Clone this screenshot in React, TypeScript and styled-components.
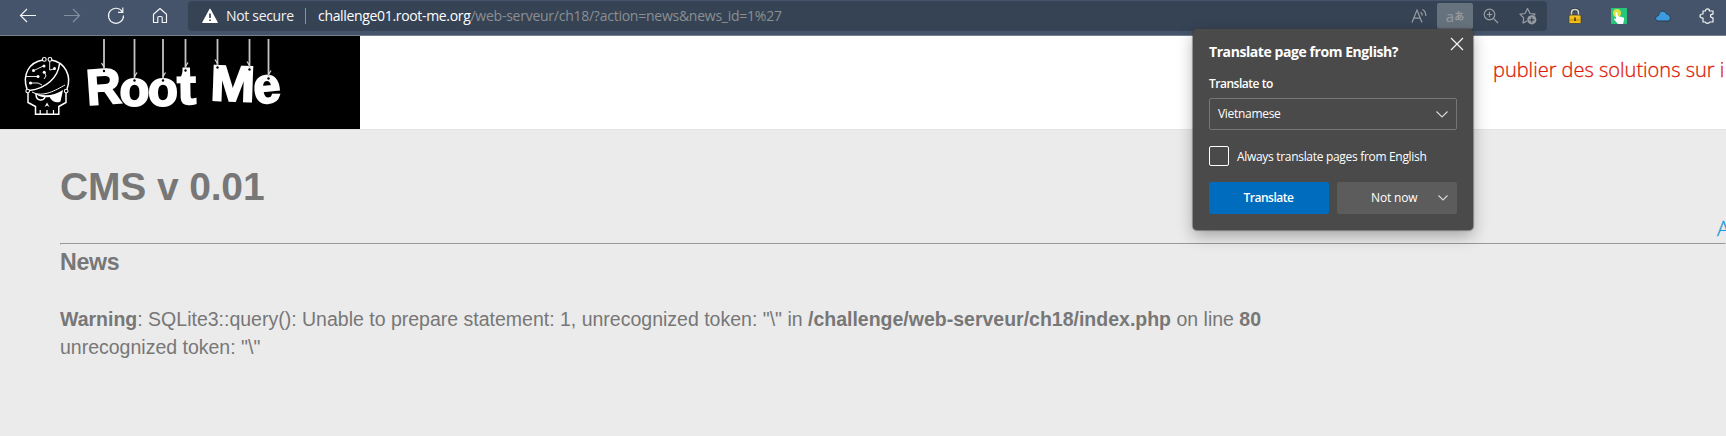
import React from 'react';
import styled, { createGlobalStyle } from 'styled-components';

const GlobalStyle = createGlobalStyle`
  * { box-sizing: border-box; }
  html, body { margin: 0; height: 100%; overflow: hidden; background: #ebebeb; }
`;

const ui = `"Open Sans", "Noto Sans", "Noto Sans CJK JP", sans-serif`;

const Browser = styled.div`
  position: relative;
  width: 1726px;
  height: 436px;
  overflow: hidden;
  display: flex;
  flex-direction: column;
  background: #ebebeb;
  font-family: ${ui};
`;

const Toolbar = styled.header`
  flex: none;
  height: 36px;
  display: flex;
  align-items: flex-start;
  background: #45546a;
  border-bottom: 1px solid #75808e;
`;

const NavButtons = styled.nav`
  width: 188px;
  height: 32px;
  padding-left: 18px;
  display: flex;
  align-items: center;
  gap: 24px;
`;

const Icon = styled.svg<{ $tone?: string }>`
  display: block;
  flex: none;
  overflow: visible;
  fill: none;
  stroke: ${(p) => p.$tone ?? '#f2f4f6'};
  stroke-width: 1.2;
`;

const AddressBar = styled.div`
  width: 1359px;
  height: 30px;
  margin-top: 1px;
  padding: 0 10px 0 14px;
  display: flex;
  align-items: center;
  background: #364354;
  border-radius: 4px;
`;

const SecurityLabel = styled.span`
  width: 87px;
  padding-left: 8px;
  font-size: 14px;
  line-height: 28px;
  letter-spacing: -0.32px;
  color: #f0f1f3;
  white-space: nowrap;
`;

const Divider = styled.i`
  width: 1px;
  height: 16px;
  margin-right: 12px;
  background: #8a929c;
`;

const Url = styled.span`
  flex: 1;
  font-size: 14px;
  line-height: 28px;
  letter-spacing: -0.25px;
  color: #8b8f93;
  white-space: nowrap;
`;

const Host = styled.span`
  letter-spacing: -0.33px;
  color: #fff;
`;

const BarTools = styled.div`
  display: flex;
  align-items: center;
`;

const TranslateToggle = styled.span`
  width: 36px;
  height: 26px;
  margin: 1px 10px 2px 9px;
  display: flex;
  align-items: center;
  justify-content: center;
  border-radius: 2px;
  background: #67727f;
  color: #969a9e;
  font-size: 15px;
  line-height: 22px;
  small { font-size: 10px; font-weight: 700; line-height: 22px; }
`;

const StarSlot = styled.span`
  margin-left: 20px;
`;

const Extensions = styled.div`
  height: 32px;
  padding-left: 20px;
  display: flex;
  align-items: center;
  gap: 28px;
`;

const Banner = styled.div`
  flex: none;
  height: 94px;
  display: flex;
  background: #fff;
  border-bottom: 1px solid #e3e3e3;
  overflow: hidden;
`;

const Logo = styled.svg`
  flex: none;
  display: block;
  width: 360px;
  height: 93px;
  background: #000;
`;

const Ticker = styled.div`
  margin-left: 1133px;
  padding-top: 20px;
  font-weight: 300;
  font-size: 20px;
  line-height: 28px;
  color: #dd1a05;
  -webkit-text-stroke: 0.3px #dd1a05;
  white-space: nowrap;
`;

const Content = styled.main`
  flex: 1;
  padding-left: 60px;
  overflow: hidden;
  font-family: "Liberation Sans", Arial, sans-serif;
  font-size: 19.5px;
  line-height: 28px;
  color: #777;
`;

const Title = styled.h1`
  margin: 34px 0 0;
  font-size: 39px;
  line-height: 46px;
  letter-spacing: -0.15px;
`;

const LinkRow = styled.div`
  height: 33px;
  padding: 4px 0 0 1657px;
  font-family: ${ui};
  font-weight: 300;
  font-size: 21px;
  line-height: 28px;
  color: #1b9bd0;
  -webkit-text-stroke: 0.3px #1b9bd0;
`;

const Rule = styled.hr`
  margin: 0;
  height: 2px;
  border: 1px solid;
  border-color: #949896 #eee #eee #949896;
`;

const Heading = styled.h3`
  margin: 3px 0 29px;
  font-size: 23.2px;
  line-height: 28px;
  letter-spacing: -0.3px;
`;

const Message = styled.p`
  margin: 0;
  white-space: pre;
`;

const Popup = styled.section`
  position: absolute;
  left: 1193px;
  top: 29px;
  width: 280px;
  height: 201px;
  padding: 17px 16px 16px;
  background: #4a4a4a;
  border-radius: 4px;
  box-shadow: 0 0 1px 1px rgba(60, 60, 60, 0.5), 0 6px 16px rgba(0, 0, 0, 0.3);
  color: #fff;
  font-size: 12px;
  line-height: 16px;
  white-space: nowrap;
`;

const PopupTitle = styled.h2`
  margin: 0;
  height: 30px;
  display: flex;
  justify-content: space-between;
  font-size: 14px;
  line-height: 12px;
  letter-spacing: -0.43px;
`;

const CloseIcon = styled(Icon)`
  margin: -9px -7px 0 0;
`;

const FieldLabel = styled.div`
  height: 22px;
  font-weight: 600;
  letter-spacing: -0.48px;
`;

const Select = styled.div`
  height: 32px;
  padding: 0 8px 1px;
  display: flex;
  align-items: center;
  justify-content: space-between;
  border: 1px solid #767676;
  border-radius: 2px;
  letter-spacing: -0.3px;
`;

const CheckRow = styled.label`
  margin: 16px 0;
  display: flex;
  align-items: center;
  gap: 8px;
  letter-spacing: -0.31px;
`;

const CheckText = styled.span`
  padding-top: 1px;
`;

const Box = styled.span`
  width: 20px;
  height: 20px;
  border: 1px solid #fff;
  border-radius: 2px;
`;

const Buttons = styled.div`
  display: grid;
  grid-template-columns: 120px 120px;
  gap: 8px;
`;

const Button = styled.button<{ $primary?: boolean }>`
  height: 32px;
  padding: ${(p) => (p.$primary ? '0 1px 1px 0' : '0 9px 1px 34px')};
  display: flex;
  align-items: center;
  justify-content: ${(p) => (p.$primary ? 'center' : 'space-between')};
  border: 0;
  border-radius: 2px;
  background: ${(p) => (p.$primary ? '#006cbe' : '#5c5c5c')};
  color: #fff;
  font: ${(p) => (p.$primary ? 600 : 400)} 12px/16px ${ui};
  letter-spacing: ${(p) => (p.$primary ? '-0.5px' : '-0.15px')};
`;

const HangingLetter = styled.text`
  font: bold 50px "Liberation Sans", Arial, sans-serif;
  fill: #fff;
  stroke: #fff;
  stroke-width: 2;
`;

const strings = [
  { x: 104, y: 35, side: -1 },
  { x: 134.5, y: 44.5, side: 1 },
  { x: 163, y: 44.5, side: 1 },
  { x: 185.5, y: 34.5, side: 1 },
  { x: 217.5, y: 31.5, side: -1 },
  { x: 249.5, y: 33.5, side: -1 },
  { x: 268.5, y: 42.5, side: 1 },
];

const letters = [
  { c: 'R', x: 87.5, y: 69, r: -4, sx: 0.96 },
  { c: 'o', x: 119.5, y: 69.5, r: 0, sx: 0.98 },
  { c: 'o', x: 148, y: 69.5, r: 0, sx: 0.98 },
  { c: 't', x: 177.5, y: 68, r: -1, sx: 1.12 },
  { c: 'M', x: 210, y: 64, r: 2, sx: 1.07 },
  { c: 'e', x: 255, y: 68, r: -6, sx: 0.97 },
];

function RootMeLogo() {
  return (
    <Logo viewBox="0 0 360 93">
      <g fill="none" stroke="#fff" strokeWidth="1.5">
        <path d="M27 53C22 39 29 26 43 24M51 24C65 26 72 40 67 53" />
        <circle cx="44.3" cy="23.4" r="1.9" strokeWidth="1.1" />
        <circle cx="50" cy="23.4" r="1.9" strokeWidth="1.1" />
        <circle cx="27.7" cy="55" r="1.8" strokeWidth="1.1" />
        <circle cx="66.2" cy="55" r="1.8" strokeWidth="1.1" />
        <path d="M28 57V66.500L35.500 70.500V78.300H58.800V70.500L66 66.500V57" />
        <path d="M40.200 74V78M47 74V78M53.500 74V78" strokeWidth="1.2" />
        <path d="M29.500 54.500C47 52 58 41 59.500 28" />
        <path d="M32 56C43 62 56 54 65 49" strokeWidth="1" />
        <path d="M49.700 25V34L54 33M33 35L39 32L43.500 30M44.500 36L46 40L44 43M26 40.500H38M31 47H38L42 49" strokeWidth="0.9" />
        <path d="M36 58C36 66 44 65 45 61" />
      </g>
      <g fill="#fff">
        <circle cx="33.500" cy="34.500" r="1.500" />
        <circle cx="44" cy="30" r="1.500" />
        <circle cx="44.200" cy="36.300" r="1.500" />
        <circle cx="54.500" cy="32.500" r="1.500" />
        <circle cx="38" cy="40.500" r="1.500" />
        <circle cx="30.500" cy="47" r="1.600" />
        <path d="M34 56.500C42 61 54 60 63 54L60.500 65.500C57 67.500 52 66 49.500 61C43 62 37 60 34 56.500Z" />
        <path d="M44.500 71L47 66.500L49.500 71L47 69.500Z" />
      </g>
      <path d="M38 60.500C40 62 42 62 43.500 61.500C42 64 39 63.500 38 60.500Z" fill="#000" />
      {letters.map((l, i) => (
        <HangingLetter key={i} transform={`translate(${l.x} ${l.y}) rotate(${l.r}) scale(${l.sx} 1)`}>
          {l.c}
        </HangingLetter>
      ))}
      <path d="M182.500 42V31.500H190V42Z" fill="#fff" />
      {strings.map((s) => (
        <g key={s.x}>
          <path d={`M${s.x} 3V${s.y - 2}`} stroke="#c4c4c4" strokeWidth="1.8" />
          <path d={`M${s.x} ${s.y - 4}l${2.5 * s.side} -4`} stroke="#ddd" strokeWidth="1.2" />
          <circle cx={s.x} cy={s.y} r="1.200" fill="#000" />
        </g>
      ))}
    </Logo>
  );
}

const Chevron = ({ size }: { size: number }) => (
  <Icon width={size} height="8" viewBox={`0 0 ${size} 8`} $tone="#d6d6d6">
    <path d={`M0.500 1.500L${size / 2} ${size / 2 + 1}L${size - 0.5} 1.500`} />
  </Icon>
);

export default function App() {
  return (
    <Browser>
      <GlobalStyle />
      <Toolbar>
        <NavButtons>
          <Icon width="20" height="20" viewBox="0 0 20 20">
            <path d="M18 9.500H2.500M9 3L2.500 9.500L9 16" />
          </Icon>
          <Icon width="20" height="20" viewBox="0 0 20 20" $tone="#8390a0">
            <path d="M2 9.500H17.500M11 3L17.500 9.500L11 16" />
          </Icon>
          <Icon width="20" height="20" viewBox="0 0 20 20">
            <path d="M16.500 6A7.500 7.500 0 1 0 17.500 9.500M16.800 1.500V6.300H12" />
          </Icon>
          <Icon width="20" height="20" viewBox="0 0 20 20">
            <path d="M3.500 8.200L10 2.500L16.500 8.200V16.500H12.200V11.500Q12.200 10.500 11.200 10.500H8.800Q7.800 10.500 7.800 11.500V16.500H3.500Z" strokeLinejoin="round" />
          </Icon>
        </NavButtons>
        <AddressBar>
          <Icon width="16" height="16" viewBox="0 0 16 16" $tone="none">
            <path d="M8 1.300L15.200 14.500H0.800Z" fill="#fff" stroke="#fff" strokeLinejoin="round" />
            <path d="M8 5.500V10M8 11.500V13" stroke="#364354" strokeWidth="1.700" />
          </Icon>
          <SecurityLabel>Not secure</SecurityLabel>
          <Divider />
          <Url>
            <Host>challenge01.root-me.org</Host>/web-serveur/ch18/?action=news&amp;news_id=1%27
          </Url>
          <BarTools>
            <Icon width="17" height="16" viewBox="0 0 17 16" $tone="#989da3">
              <path d="M1 14.500L6 2L11 14.500M2.700 10.200H9.300M9.500 4.200Q11.300 5.300 11.300 7.500M11.500 1.500Q15 3.500 14.800 8" />
            </Icon>
            <TranslateToggle>
              a<small>あ</small>
            </TranslateToggle>
            <Icon width="16" height="16" viewBox="0 0 16 16" $tone="#989da3">
              <circle cx="6.500" cy="6.500" r="5.300" />
              <path d="M10.500 10.500L15 15M6.500 3.800V9.200M3.800 6.500H9.200" />
            </Icon>
            <StarSlot>
              <Icon width="18" height="18" viewBox="0 0 18 18" $tone="#989da3">
                <path d="M8 14L4 16L4.700 11L1 7.200L6 6.500L8.500 1.500L11 6.500L16 7.200L14.500 8.500" strokeLinejoin="round" />
                <circle cx="12.800" cy="12.800" r="4.600" fill="#989da3" stroke="none" />
                <path d="M12.800 10.200V15.400M10.200 12.800H15.400" stroke="#364354" />
              </Icon>
            </StarSlot>
          </BarTools>
        </AddressBar>
        <Extensions>
          <Icon width="16" height="16" viewBox="0 0 16 16" $tone="none">
            <path d="M4.500 8V4.500Q4.500 1.500 8 1.500Q11.500 1.500 11.500 4.500V8" stroke="#2a3038" strokeWidth="3" />
            <path d="M4.500 8V4.500Q4.500 1.500 8 1.500Q11.500 1.500 11.500 4.500V8" stroke="#d4d5d2" strokeWidth="1.700" />
            <rect x="2" y="7" width="12" height="8.500" rx="1" fill="#f4c21e" stroke="#42413a" strokeWidth="0.800" />
            <path d="M3 12H13" stroke="#dda60c" strokeWidth="2.500" />
            <path d="M8 9.500V13" stroke="#5b4410" strokeWidth="1.800" />
          </Icon>
          <Icon width="16" height="16" viewBox="0 0 16 16" $tone="none">
            <rect width="16" height="16" rx="1" fill="#27c67b" />
            <circle cx="6" cy="5" r="4" fill="#d9e33b" />
            <path d="M4.500 4.500Q5.500 3.300 6.600 4.500V8L12.500 9.500Q13.500 10 13 12L12 16H7L3 11.500Q3 10 5 11Z" fill="#fff" />
          </Icon>
          <Icon width="16" height="16" viewBox="0 0 16 16" $tone="none">
            <path d="M3 13Q0.300 12.800 0.500 10.200Q1 8 3.500 7.500Q3.800 3.500 7 3Q10.300 2.700 11.300 5.800Q15.300 6.500 15.500 10Q15.300 12.800 13 13Z" fill="#3b9bdc" stroke="#28394b" strokeWidth="0.900" />
          </Icon>
          <Icon width="16" height="16" viewBox="0 0 16 16">
            <path d="M4 3H6.500Q6.500 0.800 8.500 0.800T10.500 3H14V6.200Q11.500 6.200 11.500 8T14 9.800V14H10.500Q10.500 15.300 8.500 15.300T6.500 14H4V10Q1 10 1 8T4 6Z" strokeLinejoin="round" />
          </Icon>
        </Extensions>
      </Toolbar>
      <Banner>
        <RootMeLogo />
        <Ticker>publier des solutions sur i</Ticker>
      </Banner>
      <Content>
        <Title>CMS v 0.01</Title>
        <LinkRow>A</LinkRow>
        <Rule />
        <Heading>News</Heading>
        <Message>
          <b>Warning</b>: SQLite3::query(): Unable to prepare statement: 1, unrecognized token: "\" in{' '}
          <b>/challenge/web-serveur/ch18/index.php</b> on line <b>80</b>
        </Message>
        <Message>unrecognized token: "\"</Message>
      </Content>
      <Popup>
        <PopupTitle>
          Translate page from English?
          <CloseIcon width="14" height="14" viewBox="0 0 14 14">
            <path d="M1 1L13 13M13 1L1 13" />
          </CloseIcon>
        </PopupTitle>
        <FieldLabel>Translate to</FieldLabel>
        <Select>
          Vietnamese
          <Chevron size={12} />
        </Select>
        <CheckRow>
          <Box />
          <CheckText>Always translate pages from English</CheckText>
        </CheckRow>
        <Buttons>
          <Button $primary>Translate</Button>
          <Button>
            Not now
            <Chevron size={10} />
          </Button>
        </Buttons>
      </Popup>
    </Browser>
  );
}
